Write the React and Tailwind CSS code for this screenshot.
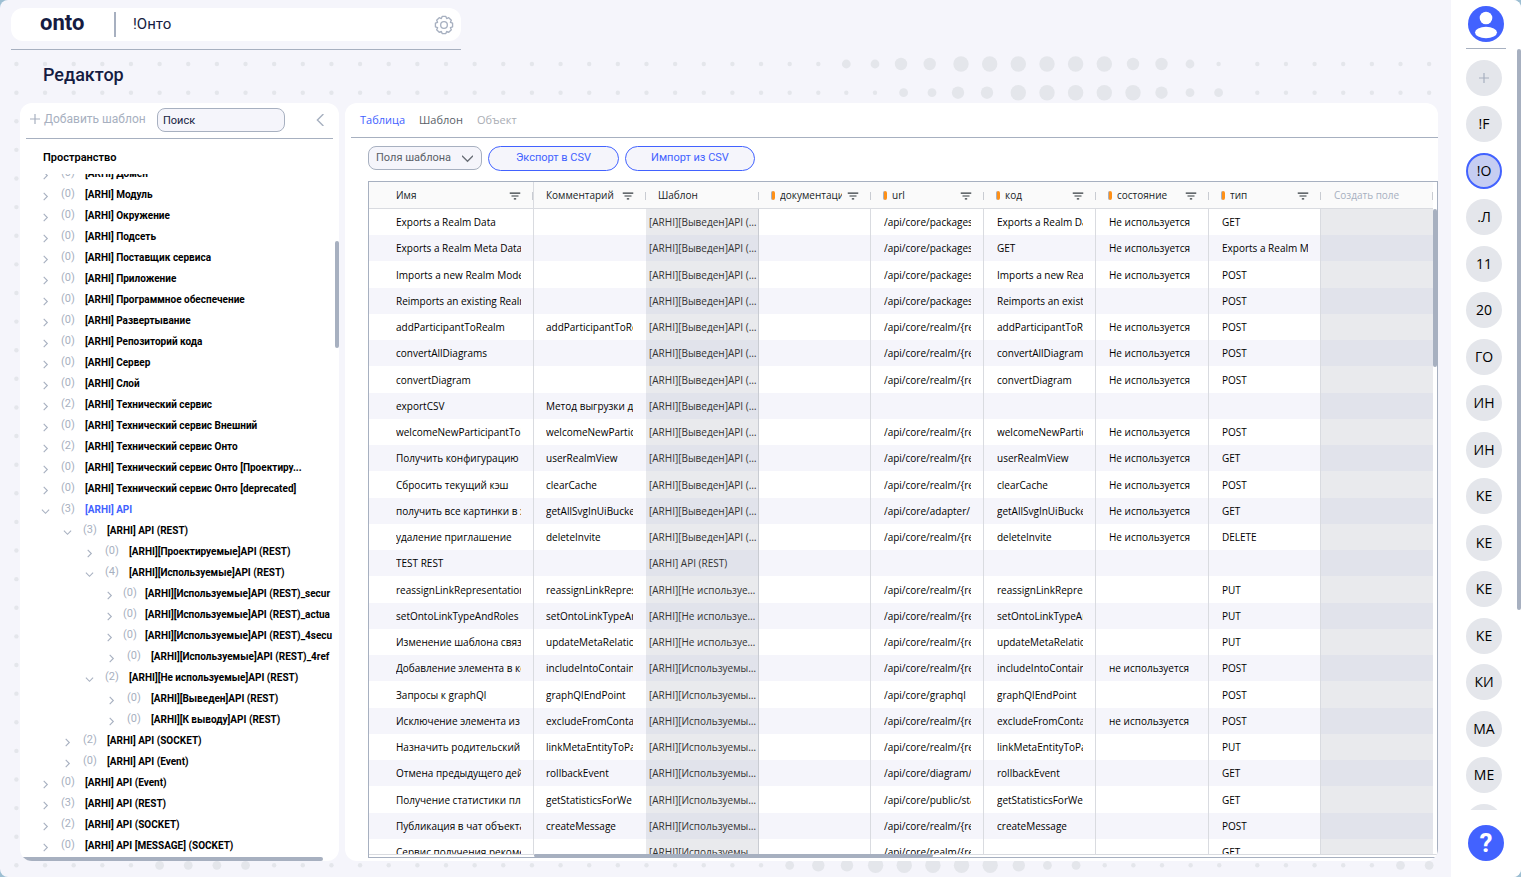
import { useState } from 'react'
import { MdFilterList } from 'react-icons/md'

const SPACES = ['!F', '!О', '.Л', '11', '20', 'ГО', 'ИН', 'ИН', 'KE', 'KE', 'KE', 'KE', 'КИ', 'MA', 'ME', 'МО']

const TREE = [
  { level: 0, count: 0, name: '[ARHI] Домен' },
  { level: 0, count: 0, name: '[ARHI] Модуль' },
  { level: 0, count: 0, name: '[ARHI] Окружение' },
  { level: 0, count: 0, name: '[ARHI] Подсеть' },
  { level: 0, count: 0, name: '[ARHI] Поставщик сервиса' },
  { level: 0, count: 0, name: '[ARHI] Приложение' },
  { level: 0, count: 0, name: '[ARHI] Программное обеспечение' },
  { level: 0, count: 0, name: '[ARHI] Развертывание' },
  { level: 0, count: 0, name: '[ARHI] Репозиторий кода' },
  { level: 0, count: 0, name: '[ARHI] Сервер' },
  { level: 0, count: 0, name: '[ARHI] Слой' },
  { level: 0, count: 2, name: '[ARHI] Технический сервис' },
  { level: 0, count: 0, name: '[ARHI] Технический сервис Внешний' },
  { level: 0, count: 2, name: '[ARHI] Технический сервис Онто' },
  { level: 0, count: 0, name: '[ARHI] Технический сервис Онто [Проектиру...' },
  { level: 0, count: 0, name: '[ARHI] Технический сервис Онто [deprecated]' },
  { level: 0, count: 3, name: '[ARHI] API', open: true, active: true },
  { level: 1, count: 3, name: '[ARHI] API (REST)', open: true },
  { level: 2, count: 0, name: '[ARHI][Проектируемые]API (REST)' },
  { level: 2, count: 4, name: '[ARHI][Используемые]API (REST)', open: true },
  { level: 3, count: 0, name: '[ARHI][Используемые]API (REST)_secur', tight: true },
  { level: 3, count: 0, name: '[ARHI][Используемые]API (REST)_actua', tight: true },
  { level: 3, count: 0, name: '[ARHI][Используемые]API (REST)_4secu', tight: true },
  { level: 3, count: 0, name: '[ARHI][Используемые]API (REST)_4ref' },
  { level: 2, count: 2, name: '[ARHI][Не используемые]API (REST)', open: true },
  { level: 3, count: 0, name: '[ARHI][Выведен]API (REST)' },
  { level: 3, count: 0, name: '[ARHI][К выводу]API (REST)' },
  { level: 1, count: 2, name: '[ARHI] API (SOCKET)' },
  { level: 1, count: 0, name: '[ARHI] API (Event)' },
  { level: 0, count: 0, name: '[ARHI] API (Event)' },
  { level: 0, count: 3, name: '[ARHI] API (REST)' },
  { level: 0, count: 2, name: '[ARHI] API (SOCKET)' },
  { level: 0, count: 0, name: '[ARHI] API [MESSAGE] (SOCKET)' },
]

const INDENT = ['pl-[21px]', 'pl-[43px]', 'pl-[65px]', 'pl-[87px]']

const COLUMNS = [
  { label: 'Имя', width: 'w-[165px]', filter: true, pad: 'pl-[27px]' },
  { label: 'Комментарий', width: 'w-[112px]', filter: true, pad: 'pl-3' },
  { label: 'Шаблон', width: 'w-[113px]', pad: 'pl-3' },
  { label: 'документация', width: 'w-[112px]', filter: true, mark: true, pad: 'pl-3' },
  { label: 'url', width: 'w-[113px]', filter: true, mark: true, pad: 'pl-3' },
  { label: 'код', width: 'w-[112px]', filter: true, mark: true, pad: 'pl-3' },
  { label: 'состояние', width: 'w-[113px]', filter: true, mark: true, pad: 'pl-3' },
  { label: 'тип', width: 'w-[112px]', filter: true, mark: true, pad: 'pl-3' },
  { label: 'Создать поле', width: '', muted: true, pad: 'pl-[13px]' },
]

const OUT = '[ARHI][Выведен]API (REST)'
const UNUSED = '[ARHI][Не используемые]API (REST)'
const USED = '[ARHI][Используемые]API (REST)'

// имя, комментарий, шаблон, url, код, состояние, тип
const ROWS = [
  ['Exports a Realm Data', '', OUT, '/api/core/packages', 'Exports a Realm Data', 'Не используется', 'GET'],
  ['Exports a Realm Meta Data', '', OUT, '/api/core/packages', 'GET', 'Не используется', 'Exports a Realm M'],
  ['Imports a new Realm Model', '', OUT, '/api/core/packages', 'Imports a new Rea', 'Не используется', 'POST'],
  ['Reimports an existing Realm', '', OUT, '/api/core/packages', 'Reimports an exist', '', 'POST'],
  ['addParticipantToRealm', 'addParticipantToRealm', OUT, '/api/core/realm/{realmId}', 'addParticipantToRealm', 'Не используется', 'POST'],
  ['convertAllDiagrams', '', OUT, '/api/core/realm/{realmId}', 'convertAllDiagrams', 'Не используется', 'POST'],
  ['convertDiagram', '', OUT, '/api/core/realm/{realmId}', 'convertDiagram', 'Не используется', 'POST'],
  ['exportCSV', 'Метод выгрузки данных', OUT, '', '', '', ''],
  ['welcomeNewParticipantToRealm', 'welcomeNewParticipant', OUT, '/api/core/realm/{realmId}', 'welcomeNewParticipant', 'Не используется', 'POST'],
  ['Получить конфигурацию', 'userRealmView', OUT, '/api/core/realm/{realmId}', 'userRealmView', 'Не используется', 'GET'],
  ['Сбросить текущий кэш', 'clearCache', OUT, '/api/core/realm/{realmId}', 'clearCache', 'Не используется', 'POST'],
  ['получить все картинки в хранилище', 'getAllSvgInUiBucket', OUT, '/api/core/adapter/', 'getAllSvgInUiBucket', 'Не используется', 'GET'],
  ['удаление приглашение', 'deleteInvite', OUT, '/api/core/realm/{realmId}', 'deleteInvite', 'Не используется', 'DELETE'],
  ['TEST REST', '', '[ARHI] API (REST)', '', '', '', ''],
  ['reassignLinkRepresentation', 'reassignLinkRepresentation', UNUSED, '/api/core/realm/{realmId}', 'reassignLinkRepresentation', '', 'PUT'],
  ['setOntoLinkTypeAndRoles', 'setOntoLinkTypeAndRoles', UNUSED, '/api/core/realm/{realmId}', 'setOntoLinkTypeAndRoles', '', 'PUT'],
  ['Изменение шаблона связи', 'updateMetaRelation', UNUSED, '/api/core/realm/{realmId}', 'updateMetaRelation', '', 'PUT'],
  ['Добавление элемента в контейнер', 'includeIntoContainer', USED, '/api/core/realm/{realmId}', 'includeIntoContainer', 'не используется', 'POST'],
  ['Запросы к graphQl', 'graphQlEndPoint', USED, '/api/core/graphql', 'graphQlEndPoint', '', 'POST'],
  ['Исключение элемента из', 'excludeFromContainer', USED, '/api/core/realm/{realmId}', 'excludeFromContainer', 'не используется', 'POST'],
  ['Назначить родительский', 'linkMetaEntityToParent', USED, '/api/core/realm/{realmId}', 'linkMetaEntityToParent', '', 'PUT'],
  ['Отмена предыдущего действия', 'rollbackEvent', USED, '/api/core/diagram/', 'rollbackEvent', '', 'GET'],
  ['Получение статистики платформы', 'getStatisticsForWe', USED, '/api/core/public/statistics', 'getStatisticsForWe', '', 'GET'],
  ['Публикация в чат объекта', 'createMessage', USED, '/api/core/realm/{realmId}', 'createMessage', '', 'POST'],
  ['Сервис получения рекомендаций', '', USED, '/api/core/realm/{realmId}', '', '', 'GET'],
]

const STEP = 28.64

// x, радиус
const TOP_DOTS = {
  64: [[846.3, 4.4], [875, 4.4], [901, 6.2], [929.7, 6.2], [961, 7.7], [989.7, 7.7], [1018.3, 7.7], [1047, 7.7], [1075.6, 7.7], [1104.3, 7.7], [1133, 6.2], [1161.5, 6.2], [1190, 4.4], [1218.6, 2.2]],
  92.7: [[846.3, 2.2], [875, 2.2], [903.6, 4.4], [932, 4.4], [958, 6.2], [987, 6.2], [1018.3, 7.7], [1047, 7.7], [1075.6, 7.7], [1104.3, 7.7], [1133, 7.7], [1161.5, 6.2], [1190, 4.4], [1218.6, 4.4]],
}

const BOTTOM_DOTS = { 5: 4.4, 6: 4.4, 7: 4.4, 8: 4.4, 27: 4.4, 28: 6.2, 29: 6.2, 30: 7.7, 31: 7.7, 32: 7.7, 33: 7.7, 34: 7.7, 35: 6.2, 36: 4.4, 37: 4.4 }

function DotsBackground() {
  const dots = []
  Object.entries(TOP_DOTS).forEach(([y, list]) => {
    for (let i = 0; i < 29; i++) dots.push([16.4 + i * STEP, Number(y), 2.2])
    list.forEach(([x, r]) => dots.push([x, Number(y), r]))
    for (let i = 0; i < 7; i++) dots.push([1257.3 + i * STEP, Number(y), 2.2])
  })
  for (let j = 2; j < 28; j++) dots.push([16.4, 64 + j * 28.62, 2.2])
  for (let i = 0; i < 43; i++) dots.push([16.4 + i * STEP, 865.3, BOTTOM_DOTS[i] ?? 2.2])
  for (let i = 0; i < 7; i++) dots.push([1257.3 + i * STEP, 865.3, i > 4 ? 4.4 : 2.2])

  return (
    <svg className="absolute inset-0 h-full w-full" fill="#e4e6eb" aria-hidden="true">
      {dots.map(([x, y, r], i) => (
        <circle key={i} cx={x} cy={y} r={r} />
      ))}
    </svg>
  )
}

function Chevron({ d, className }) {
  return (
    <svg viewBox="0 0 10 10" className={className} fill="none" stroke="currentColor" strokeWidth="1.2" aria-hidden="true">
      <path d={d} />
    </svg>
  )
}

function GearIcon() {
  return (
    <svg viewBox="0 0 24 24" className="size-5" fill="none" stroke="currentColor" strokeWidth="1.6" strokeLinejoin="round" aria-hidden="true">
      <path d="M22.3 14.2 19.7 15.2 20.8 17.7 17.7 20.8 15.2 19.7 14.2 22.3H9.8L8.8 19.7 6.3 20.8 3.2 17.7 4.3 15.2 1.7 14.2V9.8L4.3 8.8 3.2 6.3 6.3 3.2 8.8 4.3 9.8 1.7H14.2L15.2 4.3 17.7 3.2 20.8 6.3 19.7 8.8 22.3 9.8z" />
      <circle cx="12" cy="12" r="4" />
    </svg>
  )
}

function TopBar() {
  return (
    <header className="w-[450px] border-b border-[#a7b0c0] pb-2">
      <div className="flex h-[33px] items-center rounded-xl bg-white pr-[7px]">
        <a href="#" className="w-[103px] pb-1 pl-[29px] text-[22px] leading-6 font-bold text-[#151c42]">onto</a>
        <span className="h-[25px] w-0.5 bg-[#a7b0c0]" />
        <span className="flex-1 pl-[17px] text-[15px] text-[#151c42]">!Онто</span>
        <button type="button" aria-label="Настройки" className="text-[#a7b0c0]">
          <GearIcon />
        </button>
      </div>
    </header>
  )
}

function TreeRow({ node }) {
  return (
    <li className={`flex h-[21px] items-center whitespace-nowrap ${INDENT[node.level]}`}>
      <button type="button" aria-label="Раскрыть" className={`shrink-0 pt-[3px] text-[#a7b0c0] ${node.tight ? '-ml-0.5' : ''}`}>
        <Chevron d={node.open ? 'M1 3l4 4 4-4' : 'M3 1l4 4-4 4'} className="size-[9px]" />
      </button>
      <span className={`shrink-0 text-[11px] text-[#a7b0c0] ${node.tight ? 'w-[31px] pl-[9px]' : 'w-[35px] pl-[11px]'}`}>({node.count})</span>
      <a href="#" className={`text-[10px] font-bold ${node.active ? 'text-[#4262ff]' : 'text-black'}`}>{node.name}</a>
    </li>
  )
}

function Sidebar() {
  const [query, setQuery] = useState('')

  return (
    <aside className="relative flex w-[319px] shrink-0 flex-col overflow-hidden rounded-xl bg-white">
      <div className="mx-1.5 flex h-9 items-center border-b border-[#a7b0c0] pr-1.5 pb-px">
        <button type="button" className="flex w-[131px] items-center gap-1 pb-0.5 pl-1 text-xs whitespace-nowrap text-[#a7b0c0]">
          <svg viewBox="0 0 10 10" className="size-2.5 shrink-0" stroke="currentColor" strokeWidth="1.2" aria-hidden="true">
            <path d="M5 0v10M0 5h10" />
          </svg>
          Добавить шаблон
        </button>
        <input
          type="text"
          aria-label="Поиск"
          placeholder="Поиск"
          value={query}
          onChange={(e) => setQuery(e.target.value)}
          className="h-6 w-32 rounded-lg border border-[#a7b0c0] bg-[#f5f5fb] px-[5px] text-[11px] text-black placeholder:text-[#151c42]"
        />
        <button type="button" aria-label="Свернуть" className="ml-auto text-[#a7b0c0]">
          <Chevron d="M7 0L2 5l5 5" className="size-3" />
        </button>
      </div>
      <h2 className="pt-[11px] pl-[23px] text-[11px] leading-4 font-semibold text-black">Пространство</h2>
      <div className="mt-2 flex min-h-0 flex-1 flex-col overflow-hidden pr-1">
        <ul className="-mt-[11px] overflow-hidden">
          {TREE.map((node, i) => (
            <TreeRow key={i} node={node} />
          ))}
        </ul>
      </div>
      <span className="absolute top-[138px] right-0 h-[107px] w-1 rounded-sm bg-[#a7b0c0]" />
      <span className="absolute bottom-0 left-0 h-1 w-[303px] rounded-sm bg-[#a7b0c0]" />
    </aside>
  )
}

function HeaderCell({ column }) {
  return (
    <th scope="col" className={`h-[27px] p-0 font-normal ${column.width} ${column.label === 'Имя' ? 'border-r border-[#d9dbe0]' : ''}`}>
      <div className={`flex items-center ${column.pad}`}>
        {column.mark && <span className="mr-[5px] h-[9px] w-1 shrink-0 rounded-sm border border-y-0 border-r-0 border-[#a7b0c0] bg-[#ff9017]" />}
        <span className={`min-w-0 flex-1 overflow-hidden text-left whitespace-nowrap ${column.muted ? 'text-[#a7b0c0]' : 'text-[#181d1f]'}`}>
          {column.label}
        </span>
        {column.filter && (
          <button type="button" aria-label={`Фильтр: ${column.label}`} className="mr-2.5 ml-1 shrink-0 text-[#333a3f]">
            <MdFilterList size={14} />
          </button>
        )}
        <span className="h-2 w-px shrink-0 bg-[#c9ccd2]" />
      </div>
    </th>
  )
}

function DataGrid() {
  return (
    <div className="relative flex min-h-0 flex-1 flex-col overflow-hidden border border-[#a7b0c0] font-['Open_Sans',sans-serif] text-[10px]">
      <div className="min-h-0 flex-1 overflow-hidden pr-1">
        <table className="w-full table-fixed border-separate border-spacing-0">
          <thead className="bg-[#fafafa]">
            <tr className="shadow-[inset_0_-1px_0_#d9dbe0]">
              {COLUMNS.map((column) => (
                <HeaderCell key={column.label} column={column} />
              ))}
            </tr>
          </thead>
          <tbody>
            {ROWS.map(([name, comment, template, url, code, state, type], i) => (
              <tr key={i} className="h-[26px] leading-4 text-black even:bg-[#f5f5fb] nth-[4n+3]:h-[27px]">
                <td className="border-r border-[#d9dbe0] p-0 pr-3 pl-[27px]">
                  <div className="overflow-hidden whitespace-nowrap">{name}</div>
                </td>
                <td className="p-0 pr-[13px] pl-3">
                  <div className="overflow-hidden whitespace-nowrap">{comment}</div>
                </td>
                <td className={`border-r border-[#c9ccd2] p-0 pr-px pl-[3px] text-[#333] ${i % 2 ? 'bg-[#e1e3eb]' : 'bg-[#e9eaed]'}`}>
                  <div className="truncate">{template}</div>
                </td>
                <td className="border-r border-[#d9dbe0] p-0" />
                {[url, code, state, type].map((value, j) => (
                  <td key={j} className="border-r border-[#d9dbe0] p-0 pr-3 pl-[13px]">
                    <div className="overflow-hidden whitespace-nowrap">{value}</div>
                  </td>
                ))}
                <td className={`p-0 ${i % 2 ? 'bg-[#e1e3eb]' : 'bg-[#e9eaed]'}`} />
              </tr>
            ))}
          </tbody>
        </table>
      </div>
      <div className="flex h-[3px] border-t border-[#d9dbe0]" />
      <span className="absolute top-[27px] right-0 h-[158px] w-1 rounded-sm bg-[#a7b0c0]" />
      <span className="absolute bottom-0 left-[165px] h-[3px] w-[399px] rounded-sm bg-[#a7b0c0]" />
    </div>
  )
}

function Workspace() {
  return (
    <section className="flex min-w-0 flex-1 flex-col overflow-hidden rounded-xl bg-white pb-[3px]">
      <nav className="ml-1.5 flex h-[35px] shrink-0 items-center gap-[14px] border-b border-[#a7b0c0] pl-[9px] font-['Open_Sans',sans-serif] text-[11px] font-medium">
        <a href="#" className="text-[#4262ff]">Таблица</a>
        <a href="#" className="text-[#5a5f68]">Шаблон</a>
        <a href="#" className="text-[#aaadb4]">Объект</a>
      </nav>
      <div className="flex h-[43px] shrink-0 items-start gap-1.5 pt-2 pl-[23px]">
        <div className="relative">
          <select aria-label="Поля шаблона" className="block h-6 w-[114px] appearance-none rounded-lg border border-[#a7b0c0] bg-[#f5f5fb] pl-[7px] text-[11px] text-[#5a5f68]">
            <option>Поля шаблона</option>
          </select>
          <Chevron d="M0 2.5l5 5 5-5" className="pointer-events-none absolute top-[7px] right-[9px] size-[11px] text-[#6b7078]" />
        </div>
        <button type="button" className="h-[25px] w-[131px] rounded-full border border-[#4262ff] bg-[#f5f5fb] text-[11px] text-[#4262ff]">Экспорт в CSV</button>
        <button type="button" className="h-[25px] w-[130px] rounded-full border border-[#4262ff] bg-[#f5f5fb] text-[11px] text-[#4262ff]">Импорт из CSV</button>
      </div>
      <div className="ml-[23px] flex min-h-0 flex-1 flex-col">
        <DataGrid />
      </div>
    </section>
  )
}

function SpacesRail() {
  return (
    <aside className="relative flex w-[70px] shrink-0 flex-col items-center bg-white pb-4">
      <button type="button" aria-label="Профиль" className="mt-1.5">
        <svg viewBox="0 0 36 36" className="size-9" aria-hidden="true">
          <circle cx="18" cy="18" r="18" fill="#4262ff" />
          <circle cx="18" cy="12" r="6.3" fill="#fff" />
          <ellipse cx="18" cy="26.5" rx="11" ry="5.8" fill="#fff" />
        </svg>
      </button>
      <div className="mt-1.5 flex min-h-0 flex-1 flex-col items-start overflow-hidden border-t border-[#a7b0c0] pt-[11px] pr-1">
        <button type="button" aria-label="Добавить" className="mb-2.5 flex size-9 shrink-0 items-center justify-center rounded-full bg-[#e4e6eb] text-[#a7b0c0]">
          <svg viewBox="0 0 10 10" className="size-2.5" stroke="currentColor" strokeWidth="1.2" aria-hidden="true">
            <path d="M5 0v10M0 5h10" />
          </svg>
        </button>
        {SPACES.map((name, i) => (
          <button
            key={i}
            type="button"
            className={`size-9 shrink-0 rounded-full font-['Open_Sans',sans-serif] text-sm text-black odd:mb-2.5 even:mb-[11px] ${i === 1 ? 'border-2 border-[#4262ff] bg-[#c6cdf2]' : 'bg-[#e4e6eb]'}`}
          >
            {name}
          </button>
        ))}
      </div>
      <button type="button" aria-label="Помощь" className="mt-[15px] size-9 shrink-0 rounded-full bg-[#4262ff] text-[26px] leading-9 font-bold text-white">?</button>
      <span className="absolute top-[49px] right-0 h-[561px] w-1 rounded-sm bg-[#a7b0c0]" />
    </aside>
  )
}

export default function App() {
  return (
    <div className="h-screen bg-[#9dbfd3] font-[Roboto,sans-serif]">
      <div className="flex h-full overflow-hidden rounded-lg bg-[#f5f5fb]">
        <div className="relative min-w-0 flex-1">
          <DotsBackground />
          <div className="relative flex h-full flex-col pt-2 pb-4">
            <div className="pl-[11px]">
              <TopBar />
            </div>
            <h1 className="pt-[13px] pb-4 pl-[43px] text-lg leading-6 font-medium text-[#151c42]">Редактор</h1>
            <main className="flex min-h-0 flex-1 gap-1.5 pr-[13px] pl-5">
              <Sidebar />
              <Workspace />
            </main>
          </div>
        </div>
        <SpacesRail />
      </div>
    </div>
  )
}
